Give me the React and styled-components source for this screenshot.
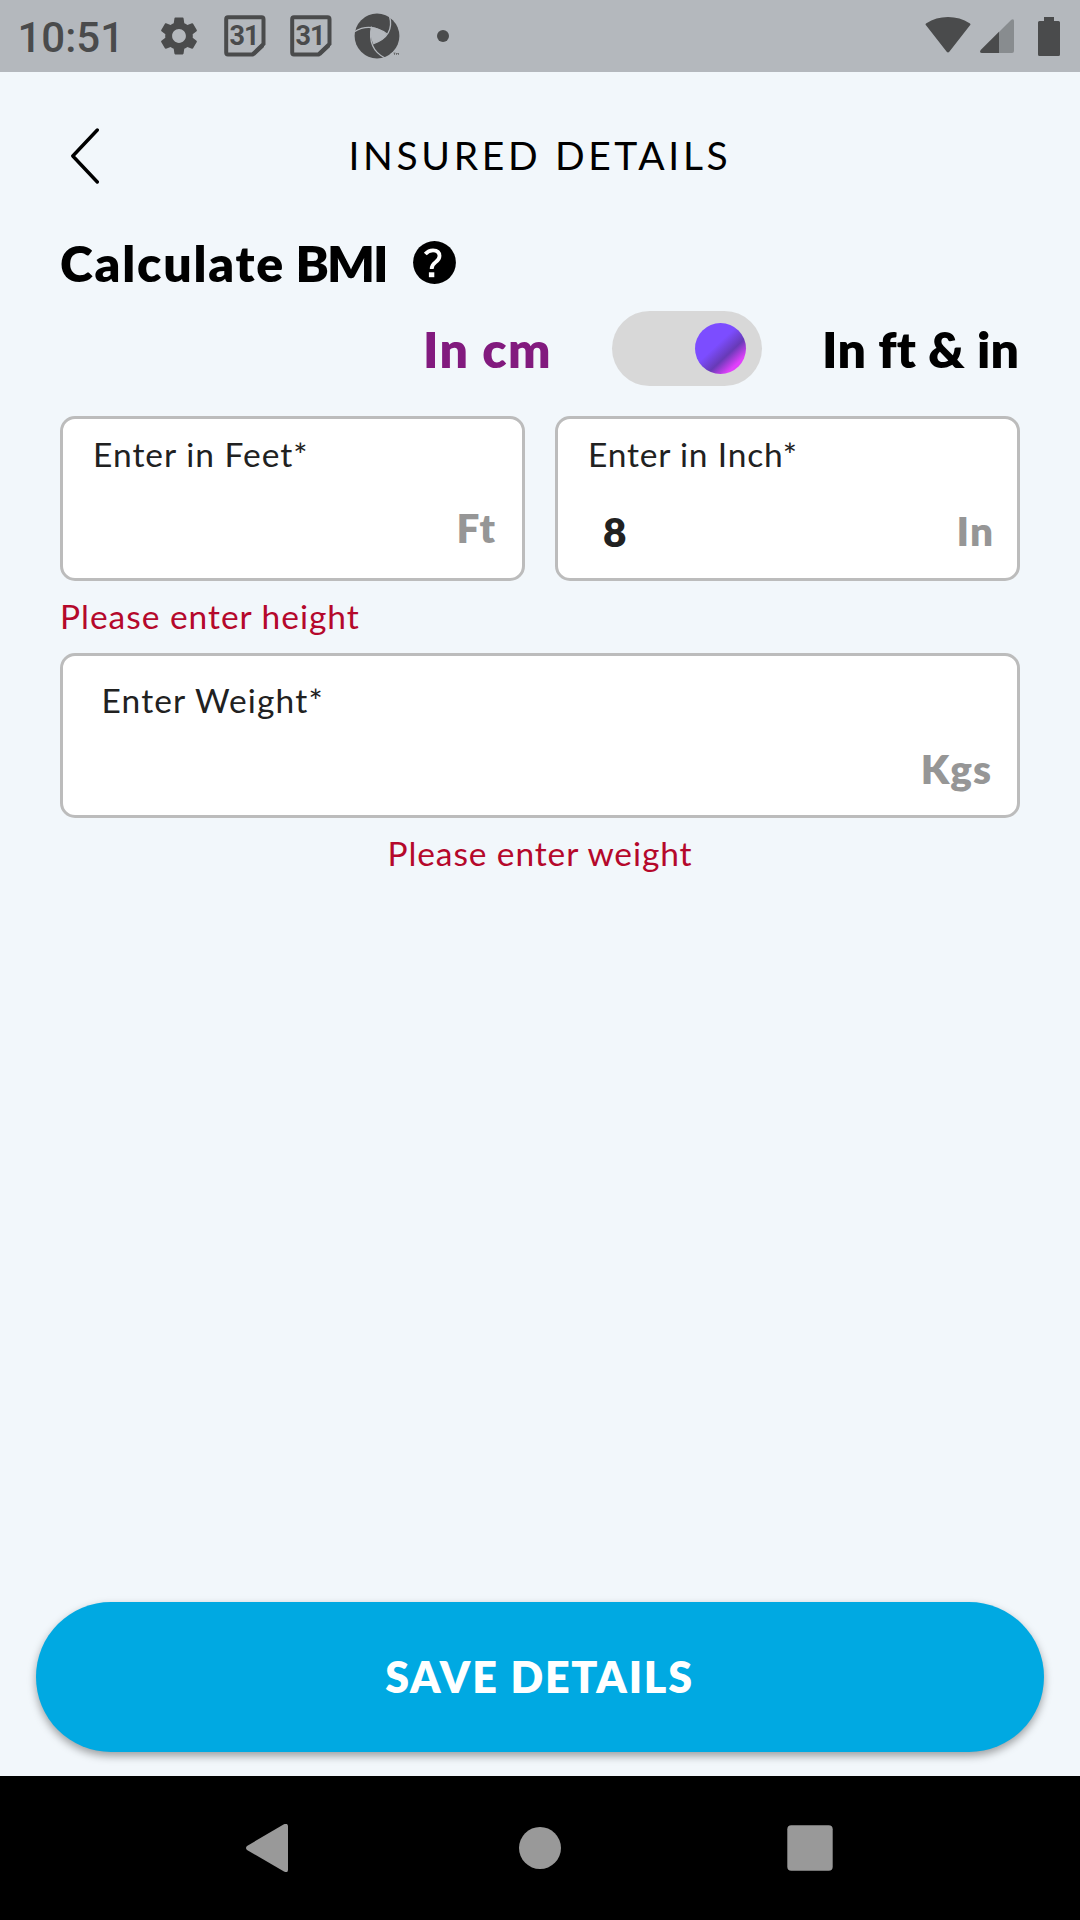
import React, { useState } from 'react';
import styled, { createGlobalStyle } from 'styled-components';
import { MdSettings } from 'react-icons/md';

const GlobalStyle = createGlobalStyle`
  *, *::before, *::after { box-sizing: border-box; }
  body { margin: 0; background: #f2f7fb; }
  button { font: inherit; border: 0; padding: 0; background: none; color: inherit; }
  svg { display: block; flex: none; }
`;

const Screen = styled.div`
  display: flex;
  flex-direction: column;
  width: 1080px;
  height: 1920px;
  overflow: hidden;
  background: #f2f7fb;
  color: #000;
  font-family: Lato, "Noto Sans", sans-serif;
  font-variant-ligatures: none;
`;

const StatusBar = styled.div`
  display: flex;
  flex: none;
  align-items: center;
  height: 72px;
  padding-right: 20px;
  background: #b4b8bd;
  color: #4a4b4c;
`;

const Clock = styled.span`
  width: 146px;
  padding: 3px 0 0 17.5px;
  font: 500 42px/48px Roboto, sans-serif;
`;

const Notification = styled.span`
  display: flex;
  justify-content: center;
  width: 66px;
`;

const SystemIcons = styled.div`
  display: flex;
  align-items: center;
  margin-left: auto;
  height: 72px;
`;

const WifiSlot = styled.span`
  margin-right: 9px;
`;

const SignalSlot = styled.span`
  margin-right: 24px;
`;

const Main = styled.main`
  display: flex;
  flex: 1;
  flex-direction: column;
`;

const Header = styled.header`
  display: grid;
  grid-template-columns: 60px 1fr 60px;
  align-items: center;
  height: 166px;
  padding: 0 60px;
`;

const BackButton = styled.button`
  display: flex;
  padding: 2px 0 0 10px;
`;

const Title = styled.h1`
  margin: 0;
  font-size: 39px;
  line-height: 48px;
  font-weight: 400;
  letter-spacing: 3.65px;
  text-align: center;
  white-space: nowrap;
`;

const Form = styled.section`
  display: flex;
  flex-direction: column;
  padding: 0 60px;
`;

const SectionHeading = styled.div`
  display: flex;
  align-items: center;
  gap: 27px;
  height: 49px;
`;

const Heading = styled.h2`
  margin: 0;
  font-size: 50px;
  line-height: 48px;
  font-weight: 800;
  letter-spacing: 1.8px;
  word-spacing: -3px;
`;

const Acronym = styled.span`
  letter-spacing: -2px;
`;

const UnitSwitch = styled.div`
  display: grid;
  grid-template-columns: 129px 150px 198px;
  column-gap: 60px;
  justify-content: end;
  align-items: center;
  height: 75px;
  margin: 24px 0 30px;
`;

const UnitLabel = styled.span`
  font-size: 50px;
  line-height: 60px;
  font-weight: 800;
  letter-spacing: ${(p) => p.$spacing}px;
  color: ${(p) => (p.$accent ? '#821a7e' : '#000')};
  white-space: nowrap;
`;

const Track = styled.button`
  display: flex;
  align-items: center;
  justify-content: ${(p) => (p.$on ? 'flex-end' : 'flex-start')};
  width: 150px;
  height: 75px;
  padding: 0 16.5px;
  border-radius: 38px;
  background: #d8d8d8;
`;

const Knob = styled.span`
  width: 51px;
  height: 51px;
  border-radius: 50%;
  background: linear-gradient(137deg, #7c4dff 43%, #673ab7 63%, #e040fb 81%);
`;

const FieldRow = styled.div`
  display: grid;
  grid-template-columns: repeat(${(p) => p.$columns}, 1fr);
  column-gap: 30px;
`;

const FieldBox = styled.div`
  display: flex;
  flex-direction: column;
  height: 165px;
  padding-top: ${(p) => p.$top}px;
  border: 3px solid #bcbcbc;
  border-radius: 15px;
  background: #fff;
`;

const FieldLabel = styled.label`
  height: 40px;
  padding-left: ${(p) => p.$left}px;
  color: #212121;
  font-size: 33.5px;
  line-height: 40px;
  letter-spacing: ${(p) => p.$spacing}px;
`;

const ValueRow = styled.div`
  display: flex;
  flex: 1;
  align-items: center;
  justify-content: space-between;
  padding: ${(p) => p.$drop}px ${(p) => p.$right}px 0 45px;
  font-size: 40.5px;
  line-height: 48px;
`;

const Value = styled.span`
  padding-top: 2px;
  color: #212121;
  font-weight: 800;
`;

const Suffix = styled.span`
  color: #969696;
  font-weight: 800;
  letter-spacing: 1px;
`;

const ErrorText = styled.p`
  height: 72px;
  margin: 0;
  color: #b5082b;
  font-size: 33.5px;
  line-height: 70px;
  letter-spacing: ${(p) => p.$spacing}px;
  text-align: ${(p) => p.$align};
`;

const Footer = styled.footer`
  margin-top: auto;
  padding: 0 36px 24px;
`;

const SaveButton = styled.button`
  display: block;
  width: 100%;
  height: 150px;
  padding: 0 1px 1px 0;
  border-radius: 75px;
  background: #00a9e2;
  box-shadow: 0 4px 9px rgba(0, 0, 0, 0.36);
  color: #fff;
  font-size: 43px;
  font-weight: 800;
  letter-spacing: 1.8px;
`;

const NavigationBar = styled.nav`
  display: flex;
  flex: none;
  align-items: center;
  justify-content: center;
  gap: 222px;
  height: 144px;
  background: #000;
  color: #999;
`;

const NavButton = styled.button`
  display: flex;
  width: 48px;
  height: 48px;
`;

const CalendarIcon = () => (
  <svg width="42" height="42" viewBox="0 0 42 42">
    <path d="M4 2.2H37.5Q39.5 2.2 39.5 4.2V29L28.5 39.5H4Q2.2 39.5 2.2 37.5V4.2Q2.2 2.2 4 2.2Z" fill="none" stroke="currentColor" strokeWidth="4" />
    <path d="M27.5 40.500L40 28.500V32L31 40.500Z" fill="currentColor" />
    <text x="20" y="30" textAnchor="middle" fontFamily="Roboto, sans-serif" fontSize="27" fontWeight="700" letterSpacing="-1" fill="currentColor">31</text>
  </svg>
);

const ApertureIcon = () => (
  <svg width="46" height="46" viewBox="0 0 46 46">
    <circle cx="23" cy="23" r="22.4" fill="currentColor" />
    <g fill="none" stroke="#b4b8bd" strokeWidth="1.3">
      <path d="M0 19Q16 9 33 21" />
      <path d="M35.5 3Q41 23 19 31" />
      <path d="M31 45Q13 36 17.5 13.5" />
    </g>
    <path d="M17.5 14Q26 15 33 21.5Q28 28.5 19 30.5Q15 22 17.5 14Z" fill="#b4b8bd" />
    <path d="M37 40.5L45 34V46H33Z" fill="#b4b8bd" />
    <path d="M39.5 40h2m-1 0v2m2 0v-2l1 1 1-1v2" fill="none" stroke="currentColor" strokeWidth="0.6" />
  </svg>
);

const DotIcon = () => (
  <svg width="12" height="12" viewBox="0 0 12 12">
    <circle cx="6" cy="6" r="6" fill="currentColor" />
  </svg>
);

const WifiIcon = () => (
  <svg width="46" height="38" viewBox="0 0 46 38">
    <path d="M1.2 8.6Q-0.2 7.2 1.4 6.2Q11 0 23 0T44.6 6.2Q46.2 7.2 44.8 8.6L24.3 34.8Q23 36.2 21.7 34.8Z" fill="currentColor" />
  </svg>
);

const SignalIcon = () => (
  <svg width="34" height="34" viewBox="0 0 34 34">
    <path d="M19 13L31.3 0.7Q34 -0.8 34 2V32Q34 34 32 34H19Z" fill="#888c8f" />
    <path d="M19 12.8V34H2Q-1 34 0.7 31Z" fill="currentColor" />
  </svg>
);

const BatteryIcon = () => (
  <svg width="22" height="39" viewBox="0 0 22 39">
    <path d="M6 0H16V4H20.5Q22 4 22 5.5V37.5Q22 39 20.5 39H1.5Q0 39 0 37.5V5.5Q0 4 1.5 4H6Z" fill="currentColor" />
  </svg>
);

const BackIcon = () => (
  <svg width="30" height="56" viewBox="0 0 30 56">
    <path d="M27.3 2L2.8 28L27.3 54" fill="none" stroke="currentColor" strokeWidth="3.4" strokeLinecap="round" strokeLinejoin="round" />
  </svg>
);

const HelpIcon = () => (
  <svg width="43" height="43" viewBox="0 0 43 43">
    <circle cx="21.5" cy="21.5" r="21.4" fill="currentColor" />
    <path d="M12.3 13Q15.5 9.3 20 9.3Q26.5 9.3 26.5 15Q26.5 18.5 22.5 21.3Q18.7 24 18.7 28" fill="none" stroke="#fff" strokeWidth="3.8" />
    <rect x="15.9" y="31.3" width="5.4" height="4.9" fill="#fff" />
  </svg>
);

const Field = ({ label, spacing, left = 30, top = 15, value = '', suffix, drop = 0, right }) => (
  <FieldBox $top={top}>
    <FieldLabel $left={left} $spacing={spacing}>{label}</FieldLabel>
    <ValueRow $drop={drop} $right={right}>
      <Value>{value}</Value>
      <Suffix>{suffix}</Suffix>
    </ValueRow>
  </FieldBox>
);

export default function App() {
  const [imperial, setImperial] = useState(true);

  return (
    <Screen>
      <GlobalStyle />
      <StatusBar>
        <Clock>10:51</Clock>
        <Notification><MdSettings size={46} /></Notification>
        <Notification><CalendarIcon /></Notification>
        <Notification><CalendarIcon /></Notification>
        <Notification><ApertureIcon /></Notification>
        <Notification><DotIcon /></Notification>
        <SystemIcons>
          <WifiSlot><WifiIcon /></WifiSlot>
          <SignalSlot><SignalIcon /></SignalSlot>
          <BatteryIcon />
        </SystemIcons>
      </StatusBar>

      <Main>
        <Header>
          <BackButton aria-label="Back"><BackIcon /></BackButton>
          <Title>INSURED DETAILS</Title>
        </Header>

        <Form>
          <SectionHeading>
            <Heading>Calculate <Acronym>BMI</Acronym></Heading>
            <HelpIcon />
          </SectionHeading>

          <UnitSwitch>
            <UnitLabel $accent $spacing={1.36}>In cm</UnitLabel>
            <Track role="switch" aria-checked={imperial} $on={imperial} onClick={() => setImperial(!imperial)}>
              <Knob />
            </Track>
            <UnitLabel $spacing={0.3}>In ft &amp; in</UnitLabel>
          </UnitSwitch>

          <FieldRow $columns={2}>
            <Field label="Enter in Feet*" spacing={1.02} suffix="Ft" drop={3} right={26} />
            <Field label="Enter in Inch*" spacing={0.82} value="8" suffix="In" drop={9} right={23} />
          </FieldRow>
          <ErrorText $align="left" $spacing={0.98}>Please enter height</ErrorText>

          <FieldRow $columns={1}>
            <Field label="Enter Weight*" spacing={1.16} left={38.5} top={24} suffix="Kgs" drop={3} right={25} />
          </FieldRow>
          <ErrorText $align="center" $spacing={0.9}>Please enter weight</ErrorText>
        </Form>

        <Footer>
          <SaveButton>SAVE DETAILS</SaveButton>
        </Footer>
      </Main>

      <NavigationBar>
        <NavButton aria-label="Back">
          <svg width="48" height="48" viewBox="0 0 48 48">
            <path d="M37.5 0.4Q42 -1.5 42 2.5V45.5Q42 49.5 38 47.5L1 26Q-1 24 1 22Z" fill="currentColor" />
          </svg>
        </NavButton>
        <NavButton aria-label="Home">
          <svg width="48" height="48" viewBox="0 0 48 48">
            <circle cx="24" cy="24" r="21" fill="currentColor" />
          </svg>
        </NavButton>
        <NavButton aria-label="Recent apps">
          <svg width="48" height="48" viewBox="0 0 48 48">
            <rect x="1.3" y="1.3" width="45.4" height="45.4" rx="4" fill="currentColor" />
          </svg>
        </NavButton>
      </NavigationBar>
    </Screen>
  );
}
